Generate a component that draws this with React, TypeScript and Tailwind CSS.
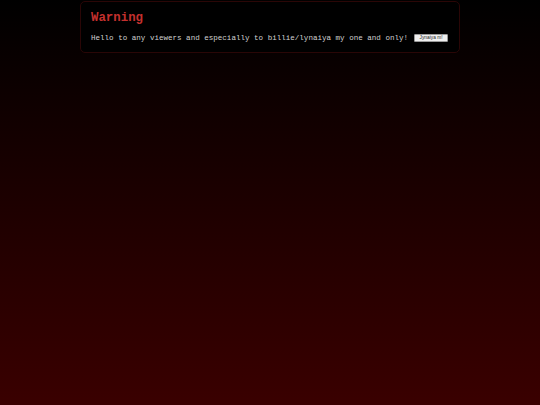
export default function App() {
  return (
    <div className="min-h-[405px] w-full bg-linear-to-b/srgb from-black to-[#3a0000] pt-px">
      <div className="ml-[80px] w-[380px] rounded-[5px] border border-[#2a0606] bg-black px-[10px] pb-[9px] pt-[8px]">
        <h1 className="font-['Liberation_Mono',monospace] text-[12.4px] font-bold leading-[16px] text-[#c4302e]">
          Warning
        </h1>
        <div className="mt-[7px] flex items-center gap-[6px]">
          <p className="font-['Liberation_Mono',monospace] text-[7.55px] leading-[10px] text-[#d0d0d0]">
            Hello to any viewers and especially to billie/lynaiya my one and only!
          </p>
          <button
            type="button"
            className="flex h-[8px] w-[34px] items-center justify-center rounded-[1px] border border-[#999] bg-[#efefef] font-['Liberation_Sans',sans-serif] text-[4.8px] leading-none text-[#222]"
          >
            Jynaiya m!
          </button>
        </div>
      </div>
    </div>
  );
}
